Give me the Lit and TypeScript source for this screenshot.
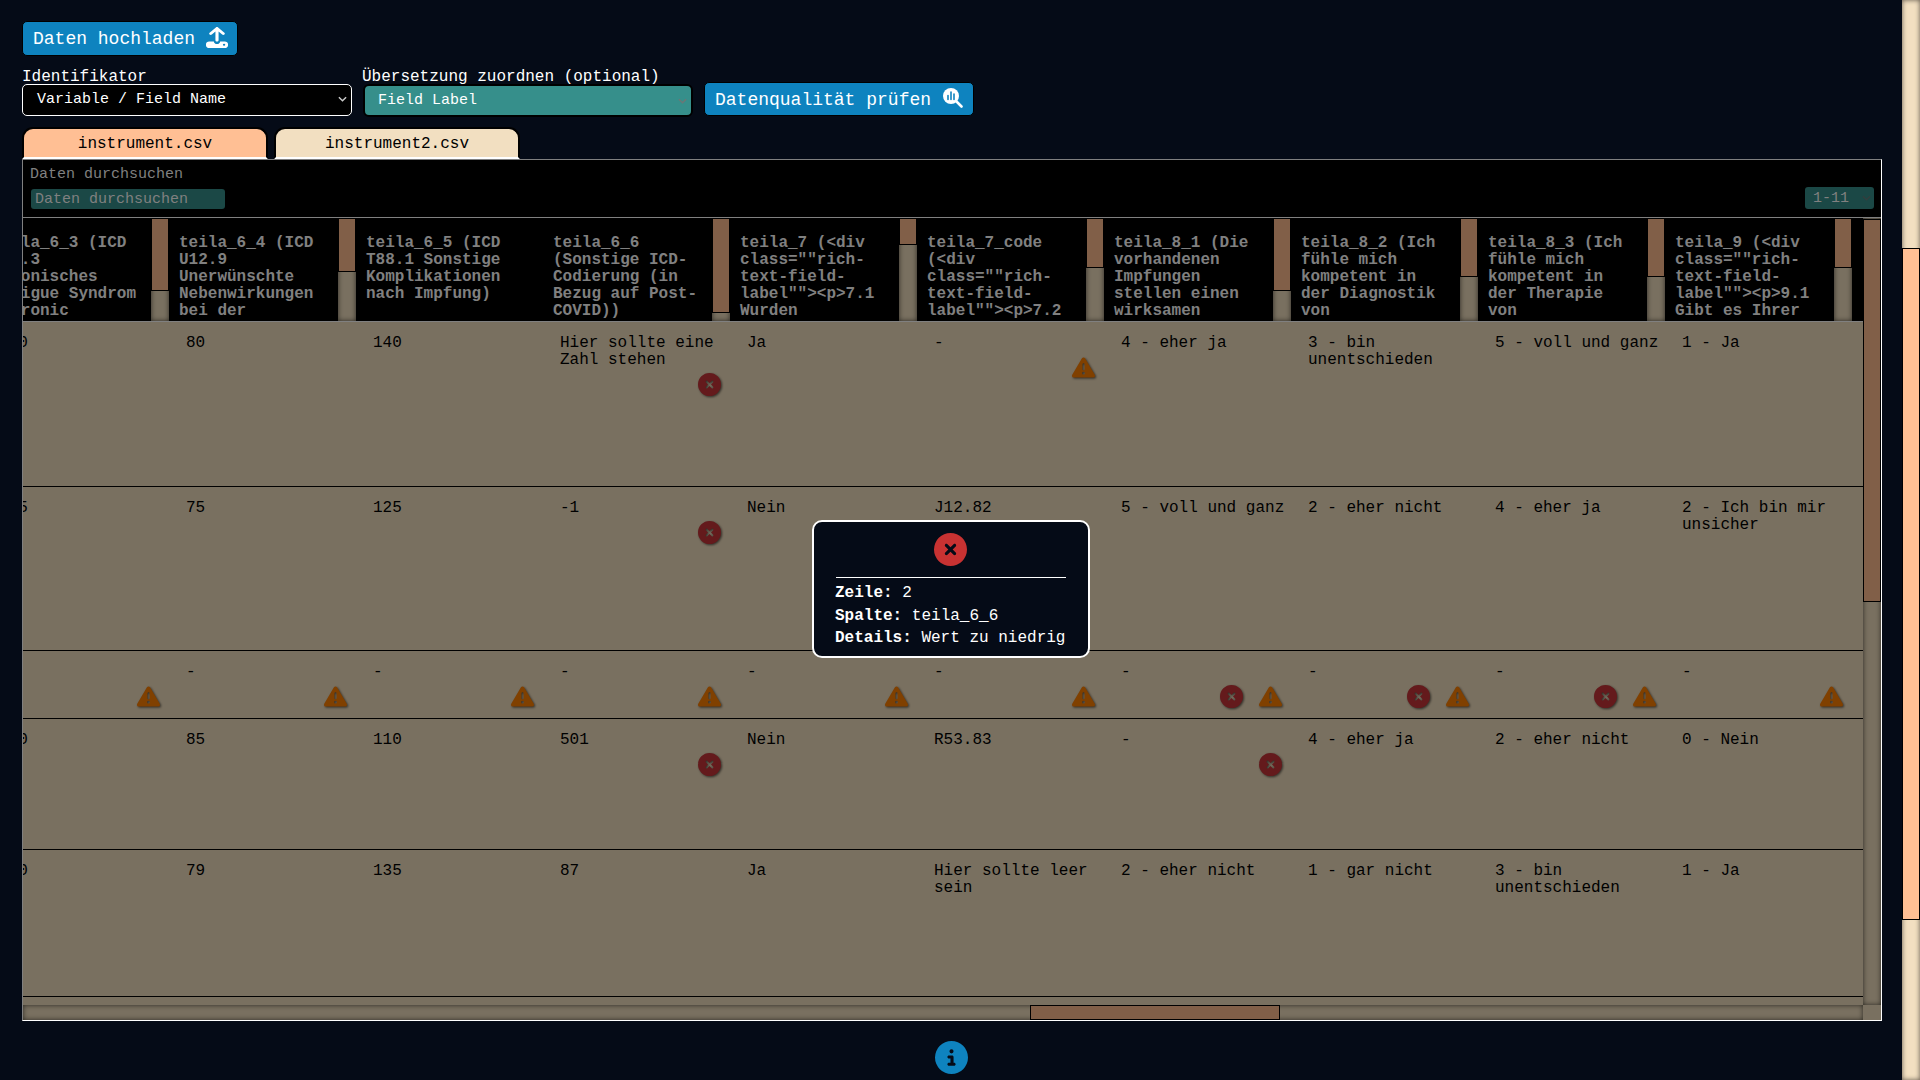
import { LitElement, html, svg, css, nothing } from "lit";
import { customElement } from "lit/decorators.js";

type Issue = "e" | "w";
interface Cell { t: string; i?: Issue[] }
const c = (t: string, ...i: Issue[]): Cell => ({ t, i });

const HEADERS: { t: string; thumb: number }[] = [
  { t: "teila_6_3 (ICD\nG93.3\nChronisches\nFatigue Syndrom\n(Chronic", thumb: 71 },
  { t: "teila_6_4 (ICD\nU12.9\nUnerwünschte\nNebenwirkungen\nbei der", thumb: 52 },
  { t: "teila_6_5 (ICD\nT88.1 Sonstige\nKomplikationen\nnach Impfung)", thumb: 0 },
  { t: "teila_6_6\n(Sonstige ICD-\nCodierung (in\nBezug auf Post-\nCOVID))", thumb: 93 },
  { t: "teila_7 (<div\nclass=\"\"rich-\ntext-field-\nlabel\"\"><p>7.1\nWurden", thumb: 25 },
  { t: "teila_7_code\n(<div\nclass=\"\"rich-\ntext-field-\nlabel\"\"><p>7.2", thumb: 48 },
  { t: "teila_8_1 (Die\nvorhandenen\nImpfungen\nstellen einen\nwirksamen", thumb: 71 },
  { t: "teila_8_2 (Ich\nfühle mich\nkompetent in\nder Diagnostik\nvon", thumb: 57 },
  { t: "teila_8_3 (Ich\nfühle mich\nkompetent in\nder Therapie\nvon", thumb: 57 },
  { t: "teila_9 (<div\nclass=\"\"rich-\ntext-field-\nlabel\"\"><p>9.1\nGibt es Ihrer", thumb: 48 },
];

const ROWS: { h: number; cells: Cell[] }[] = [
  { h: 165, cells: [c("100"), c("80"), c("140"), c("Hier sollte eine\nZahl stehen", "e"), c("Ja"), c("-", "w"), c("4 - eher ja"), c("3 - bin\nunentschieden"), c("5 - voll und ganz"), c("1 - Ja")] },
  { h: 164, cells: [c("105"), c("75"), c("125"), c("-1", "e"), c("Nein"), c("J12.82"), c("5 - voll und ganz"), c("2 - eher nicht"), c("4 - eher ja"), c("2 - Ich bin mir\nunsicher")] },
  { h: 68, cells: [c("-", "w"), c("-", "w"), c("-", "w"), c("-", "w"), c("-", "w"), c("-", "w"), c("-", "e", "w"), c("-", "e", "w"), c("-", "e", "w"), c("-", "w")] },
  { h: 131, cells: [c("100"), c("85"), c("110"), c("501", "e"), c("Nein"), c("R53.83"), c("-", "e"), c("4 - eher ja"), c("2 - eher nicht"), c("0 - Nein")] },
  { h: 147, cells: [c("100"), c("79"), c("135"), c("87"), c("Ja"), c("Hier sollte leer\nsein"), c("2 - eher nicht"), c("1 - gar nicht"), c("3 - bin\nunentschieden"), c("1 - Ja")] },
];

const X_PATH = "M256 512A256 256 0 1 0 256 0a256 256 0 1 0 0 512zM175 175c9.400-9.400 24.600-9.400 33.900 0l47 47 47-47c9.400-9.400 24.600-9.400 33.900 0s9.400 24.600 0 33.900l-47 47 47 47c9.400 9.400 9.400 24.600 0 33.900s-24.600 9.400-33.900 0l-47-47-47 47c-9.400 9.400-24.600 9.400-33.900 0s-9.400-24.600 0-33.900l47-47-47-47c-9.400-9.400-9.400-24.600 0-33.900z";
const W_PATH = "M256 32c14.200 0 27.300 7.500 34.500 19.800l216 368c7.300 12.400 7.300 27.700.2 40.100S486.300 480 472 480H40c-14.300 0-27.600-7.700-34.700-20.100s-7-27.800.2-40.100l216-368C228.700 39.500 241.800 32 256 32zm0 128c-13.300 0-24 10.700-24 24v112c0 13.300 10.700 24 24 24s24-10.700 24-24V184c0-13.300-10.700-24-24-24zm32 224a32 32 0 1 0-64 0 32 32 0 1 0 64 0z";
const I_PATH = "M256 512A256 256 0 1 0 256 0a256 256 0 1 0 0 512zM216 336h24v-64h-24c-13.300 0-24-10.700-24-24s10.700-24 24-24h48c13.300 0 24 10.700 24 24v88h8c13.300 0 24 10.700 24 24s-10.700 24-24 24h-80c-13.300 0-24-10.700-24-24s10.700-24 24-24zm40-208a32 32 0 1 1 0 64 32 32 0 1 1 0-64z";
const UP_PATH = "M246.600 9.400c-12.500-12.500-32.800-12.500-45.300 0l-128 128c-12.500 12.500-12.500 32.800 0 45.300s32.800 12.500 45.300 0L192 109.300V320c0 17.700 14.300 32 32 32s32-14.300 32-32V109.300l73.400 73.400c12.500 12.500 32.800 12.500 45.300 0s12.500-32.800 0-45.300l-128-128z";

const icon = (path: string, cls: string) =>
  html`<svg class=${cls} viewBox="0 0 512 512">${svg`<path d=${path} fill="currentColor" fill-rule="evenodd"/>`}</svg>`;
const chevron = (cls: string) =>
  html`<svg class="chev ${cls}" viewBox="0 0 10 6"><path d="M1 1l4 4 4-4" fill="none" stroke="currentColor" stroke-width="1.600"/></svg>`;

@customElement("app-root")
export class AppRoot extends LitElement {
  static styles = css`
    :host {
      display: block; width: 1920px; height: 1080px; overflow: hidden;
      background: #050b17; color: #fff;
      font: 16px/17px "Liberation Mono", monospace;
    }
    * { box-sizing: border-box; }
    .page { display: flex; height: 1080px; }
    .main { flex: 1; padding: 21px 20px 0 22px; position: relative; display: flex; flex-direction: column; }
    .btn {
      display: flex; align-items: center; gap: 12px; width: max-content; height: 35px; padding: 0 10px;
      background: #0e83bf; border: 1px solid #000; border-radius: 5px; font-size: 18px;
    }
    .btn span { padding-top: 2px; }
    .btn svg { width: 20px; height: 20px; flex: none; }
    .btn .up { width: 22px; height: 21px; margin: -2px -1px 0; }
    .fields { display: flex; align-items: flex-end; margin-top: 11px; height: 50px; }
    .field { display: flex; flex-direction: column; }
    .field > span { height: 16px; line-height: 18px; }
    .select { display: flex; align-items: center; justify-content: space-between; font-size: 15px; }
    .s1 { width: 330px; height: 32px; margin: 0 10px 1px 0; padding: 0 4px 2px 14px; background: #000; border: 1px solid #fff; border-radius: 5px; }
    .s2 { width: 330px; height: 33px; margin: 0 0 0 1px; padding: 0 4px 0 13px; background: #368f8b; border: 2px solid #000; border-radius: 6px; }
    .chev { width: 9px; height: 6px; flex: none; color: #ccc; }
    .chev.dim { color: #6b7776; }
    .chev.dark { color: #333f3e; }
    .check { margin: 0 0 1px 11px; height: 34px; }
    .check svg { margin-top: -3px; }
    .tabs { display: flex; gap: 6px; margin-top: 10px; height: 32px; }
    .tab {
      width: 246px; height: 32px; border: 2px solid #000; border-bottom: 2px solid #fff; border-radius: 11px 11px 0 0;
      background: #f2dfc1; color: #000; text-align: center; line-height: 31px;
    }
    .tab.on { background: #ffbf94; }
    .panel {
      width: 1860px; height: 862px; border: 1px solid; border-color: #808080 #fff #fff #808080;
      display: flex; flex-direction: column; color: #808080; background: #797060;
    }
    .bar { height: 58px; background: #000; border-bottom: 1px solid #808080; display: flex; justify-content: space-between; align-items: flex-end; padding: 0 7px 8px 7px; font-size: 15px; }
    .search { display: flex; flex-direction: column; gap: 6px; }
    .input { width: 194px; height: 20px; margin-left: 1px; background: #1b4846; border-radius: 3px; padding: 2px 4px; line-height: 17px; }
    .pager { width: 69px; height: 22px; background: #1b4846; border-radius: 3px; padding: 0 3px 0 8px; }
    .body { flex: 1; min-height: 0; display: grid; grid-template: 1fr 15px / 1fr 18px; }
    .grid { overflow: hidden; min-width: 0; }
    .table { width: 1880px; margin-left: -40px; }
    .head { display: flex; height: 104px; background: #000; border-bottom: 1px solid #808080; padding-top: 1px; }
    .th { width: 187px; flex: none; display: flex; justify-content: space-between; font-weight: 700; }
    .th p { margin: 0; padding: 16px 0 0 9px; white-space: pre; }
    .track { background: #797060; box-shadow: inset 0 0 5px #2b2822; }
    .thumb { background: #815f48; border: 1px solid #000; }
    .vbar { width: 18px; margin-right: 1px; flex: none; }
    .vbar .thumb { border-top: 0; }
    .row { display: flex; border-bottom: 1px solid #000; color: #000; }
    .td { width: 187px; flex: none; padding: 13px 10px 0 16px; display: flex; flex-direction: column; }
    .td p { margin: 0; white-space: pre; }
    .issues { display: flex; justify-content: flex-end; gap: 16px; margin-top: 4px; }
    .issues svg { width: 23px; height: 23px; overflow: visible; filter: drop-shadow(1px 1px 1px rgba(0,0,0,.6)); }
    .e { color: #641a1c; }
    .w { color: #804000; }
    .hbar { padding-left: 1007px; }
    .hbar .thumb { width: 250px; height: 15px; }
    .side .thumb { height: 383px; margin-top: 1px; }
    .corner { background: #797060; }
    .info { align-self: center; margin: 20px 2px 0 0; width: 33px; height: 33px; color: #0e83bf; }
    .pagebar { width: 18px; background: #f2dfc1; box-shadow: inset 0 0 5px #5e564a; padding-top: 248px; }
    .pagebar div { height: 672px; background: #ffbf94; border: 1px solid #000; }
    .popup {
      position: absolute; left: 812px; top: 520px; width: 278px; height: 138px; padding: 11px 22px 0;
      background: #050b17; border: 2px solid #fff; border-radius: 10px; white-space: pre; line-height: 22.500px;
    }
    .popup svg { display: block; width: 33px; height: 33px; margin: 0 auto 11px 98px; color: #c83232; }
    .popup hr { margin: 0 0 4px; border: 0; height: 1px; background: #fff; }
    .popup div { margin-left: -1px; }
  `;

  render() {
    return html`
      <div class="page">
        <div class="main">
          <div class="btn"><span>Daten hochladen</span>
            <svg class="up" viewBox="0 0 448 512" preserveAspectRatio="none"><path fill="#fff" d=${UP_PATH}/><path fill="#fff" fill-rule="evenodd" d="M64 352h96c0 35 29 64 64 64s64-29 64-64h96c35 0 64 29 64 64v32c0 35-29 64-64 64H64c-35 0-64-29-64-64v-32c0-35 29-64 64-64zm304 104a24 24 0 1 0 0-48 24 24 0 1 0 0 48z"/></svg>
          </div>
          <div class="fields">
            <div class="field"><span>Identifikator</span><div class="select s1">Variable / Field Name${chevron("")}</div></div>
            <div class="field"><span>Übersetzung zuordnen (optional)</span><div class="select s2">Field Label${chevron("dim")}</div></div>
            <div class="btn check"><span>Datenqualität prüfen</span>
              <svg viewBox="0 0 20 20"><circle cx="8" cy="8" r="8" fill="#fff"/><path d="M13 13l5.500 5.500" stroke="#fff" stroke-width="2.600" stroke-linecap="round"/><path d="M5 7.500v4M8 4v7.500M11 6v5.500" stroke="#0e83bf" stroke-width="1.600" stroke-linecap="round"/></svg>
            </div>
          </div>
          <div class="tabs"><div class="tab on">instrument.csv</div><div class="tab">instrument2.csv</div></div>
          <div class="panel">
            <div class="bar">
              <div class="search"><span>Daten durchsuchen</span><div class="input">Daten durchsuchen</div></div>
              <div class="select pager">1-11${chevron("dark")}</div>
            </div>
            <div class="body">
              <div class="grid"><div class="table">
                <div class="head">${HEADERS.map((h) => html`<div class="th"><p>${h.t}</p>${h.thumb
                  ? html`<div class="track vbar"><div class="thumb" style="height:${h.thumb + 1}px"></div></div>` : nothing}</div>`)}</div>
                ${ROWS.map((r) => html`<div class="row" style="height:${r.h}px">${r.cells.map((d) => html`<div class="td"><p>${d.t}</p>
                  <div class="issues">${(d.i ?? []).map((k) => icon(k === "e" ? X_PATH : W_PATH, k))}</div></div>`)}</div>`)}
              </div></div>
              <div class="track side"><div class="thumb"></div></div>
              <div class="track hbar"><div class="thumb"></div></div>
              <div class="corner"></div>
            </div>
          </div>
          ${icon(I_PATH, "info")}
          <div class="popup">${icon(X_PATH, "")}<hr><div><b>Zeile:</b> 2</div><div><b>Spalte:</b> teila_6_6</div><div><b>Details:</b> Wert zu niedrig</div></div>
        </div>
        <div class="pagebar"><div></div></div>
      </div>`;
  }
}
